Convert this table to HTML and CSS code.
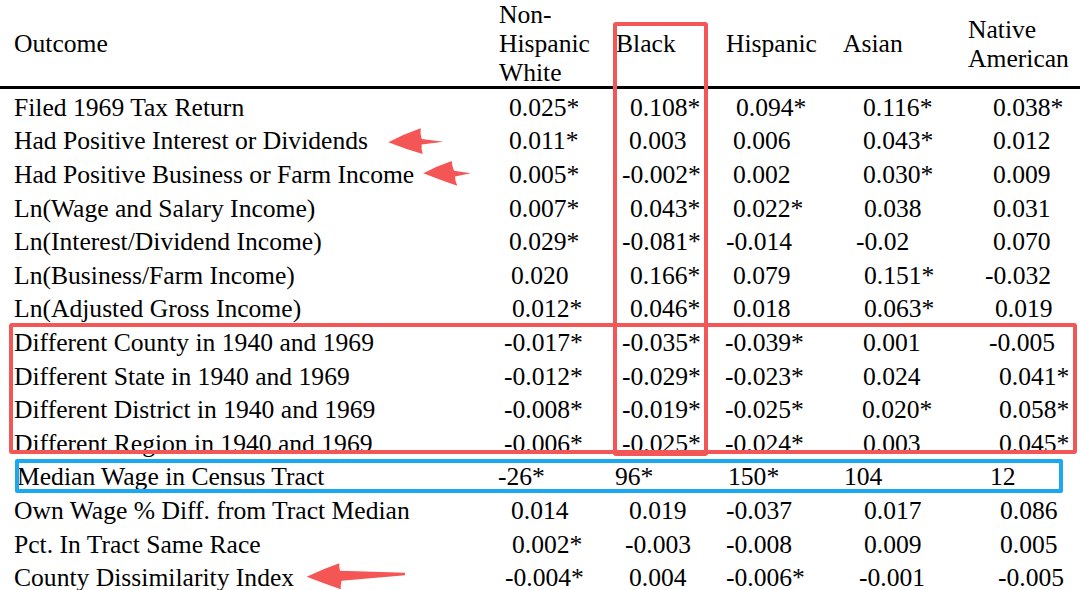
FILE: index.html
```html
<!DOCTYPE html>
<html lang="en">
<head>
<meta charset="utf-8">
<title>Outcome table</title>
<link rel="stylesheet" href="styles.css">
</head>
<body>
<div class="page">
  <div class="table">
    <div class="row head">
      <div class="cell lab">Outcome</div>
      <div class="cell h1">Non-<br>Hispanic<br>White</div>
      <div class="cell h2">Black</div>
      <div class="cell h3">Hispanic</div>
      <div class="cell h4">Asian</div>
      <div class="cell h5">Native<br>American</div>
    </div>
    <div class="rule"></div>
    <div class="body">
      <div class="row">
        <div class="cell lab">Filed 1969 Tax Return</div>
        <div class="cell c1">0.025*</div><div class="cell c2">0.108*</div><div class="cell c3 i3">0.094*</div><div class="cell c4">0.116*</div><div class="cell c5">0.038*</div>
      </div>
      <div class="row">
        <div class="cell lab">Had Positive Interest or Dividends</div>
        <div class="cell c1">0.011*</div><div class="cell c2 i-1">0.003</div><div class="cell c3">0.006</div><div class="cell c4">0.043*</div><div class="cell c5">0.012</div>
      </div>
      <div class="row">
        <div class="cell lab">Had Positive Business or Farm Income</div>
        <div class="cell c1">0.005*</div><div class="cell c2 i-8">-0.002*</div><div class="cell c3">0.002</div><div class="cell c4">0.030*</div><div class="cell c5">0.009</div>
      </div>
      <div class="row">
        <div class="cell lab">Ln(Wage and Salary Income)</div>
        <div class="cell c1">0.007*</div><div class="cell c2">0.043*</div><div class="cell c3">0.022*</div><div class="cell c4 i1">0.038</div><div class="cell c5">0.031</div>
      </div>
      <div class="row">
        <div class="cell lab">Ln(Interest/Dividend Income)</div>
        <div class="cell c1">0.029*</div><div class="cell c2 i-8">-0.081*</div><div class="cell c3 i-7">-0.014</div><div class="cell c4 i-7">-0.02</div><div class="cell c5">0.070</div>
      </div>
      <div class="row">
        <div class="cell lab">Ln(Business/Farm Income)</div>
        <div class="cell c1 i2">0.020</div><div class="cell c2">0.166*</div><div class="cell c3">0.079</div><div class="cell c4 i1">0.151*</div><div class="cell c5 i-8">-0.032</div>
      </div>
      <div class="row">
        <div class="cell lab">Ln(Adjusted Gross Income)</div>
        <div class="cell c1 i3">0.012*</div><div class="cell c2">0.046*</div><div class="cell c3">0.018</div><div class="cell c4 i1">0.063*</div><div class="cell c5 i2">0.019</div>
      </div>
      <div class="row">
        <div class="cell lab">Different County in 1940 and 1969</div>
        <div class="cell c1 i-5">-0.017*</div><div class="cell c2 i-8">-0.035*</div><div class="cell c3 i-8">-0.039*</div><div class="cell c4">0.001</div><div class="cell c5 i-4">-0.005</div>
      </div>
      <div class="row">
        <div class="cell lab">Different State in 1940 and 1969</div>
        <div class="cell c1 i-5">-0.012*</div><div class="cell c2 i-8">-0.029*</div><div class="cell c3 i-8">-0.023*</div><div class="cell c4">0.024</div><div class="cell c5 i6">0.041*</div>
      </div>
      <div class="row">
        <div class="cell lab">Different District in 1940 and 1969</div>
        <div class="cell c1 i-5">-0.008*</div><div class="cell c2 i-8">-0.019*</div><div class="cell c3 i-8">-0.025*</div><div class="cell c4 i-1">0.020*</div><div class="cell c5 i6">0.058*</div>
      </div>
      <div class="row">
        <div class="cell lab">Different Region in 1940 and 1969</div>
        <div class="cell c1 i-5">-0.006*</div><div class="cell c2 i-8">-0.025*</div><div class="cell c3 i-8">-0.024*</div><div class="cell c4">0.003</div><div class="cell c5 i6">0.045*</div>
      </div>
      <div class="row">
        <div class="cell lab med">Median Wage in Census Tract</div>
        <div class="cell c1 i-11">-26*</div><div class="cell c2 i-15">96*</div><div class="cell c3 i-5">150*</div><div class="cell c4 i-19">104</div><div class="cell c5 i-3">12</div>
      </div>
      <div class="row">
        <div class="cell lab">Own Wage % Diff. from Tract Median</div>
        <div class="cell c1 i2">0.014</div><div class="cell c2 i-1">0.019</div><div class="cell c3 i-7">-0.037</div><div class="cell c4 i1">0.017</div><div class="cell c5 i7">0.086</div>
      </div>
      <div class="row">
        <div class="cell lab">Pct. In Tract Same Race</div>
        <div class="cell c1 i3">0.002*</div><div class="cell c2 i-5">-0.003</div><div class="cell c3 i-7">-0.008</div><div class="cell c4 i1">0.009</div><div class="cell c5 i7">0.005</div>
      </div>
      <div class="row last">
        <div class="cell lab">County Dissimilarity Index</div>
        <div class="cell c1 i-4">-0.004*</div><div class="cell c2 i-1">0.004</div><div class="cell c3 i-7">-0.006*</div><div class="cell c4 i-4">-0.001</div><div class="cell c5 i5">-0.005</div>
      </div>
    </div>
  </div>

  <div class="box box-black"></div>
  <div class="box box-move"></div>
  <div class="box box-wage"></div>

  <svg class="arrows" width="1080" height="590" viewBox="0 0 1080 590" aria-hidden="true">
    <path d="M388.3 142.3 Q404 134 420.7 128.3 Q420 134 421.7 139 L443.3 141.7 L421.7 144.5 Q421 149 422.7 154 Q405 149 388.3 142.3 Z"/>
    <path d="M423.3 173.3 Q437 166 451.7 161 Q452 166 454 170.7 L470.7 173.3 L455 176.5 Q455 181 457.3 185.7 Q440 180 423.3 173.3 Z"/>
    <path d="M306.7 576.7 Q323 569 339.3 563.3 Q339 567 340 570.7 L405 572.8 L405 575.3 L341.5 580.7 Q340.5 585 340.7 589.3 Q323 583 306.7 576.7 Z"/>
  </svg>
</div>
</body>
</html>
```

FILE: styles.css
```css
html, body {
  margin: 0;
  padding: 0;
  background: #ffffff;
}

.page {
  position: relative;
  width: 1080px;
  height: 590px;
  overflow: hidden;
  font-family: "Liberation Serif", "Times New Roman", serif;
  font-size: 25.6px;
  color: #000000;
}

.row {
  display: grid;
  grid-template-columns: 495px 120px 110px 115px 125px 115px;
  line-height: 33.6px;
  white-space: nowrap;
}

.row.last {
  line-height: 24px;
  padding-top: 4.8px;
}

.head {
  height: 86px;
  line-height: 29px;
  align-items: center;
}

.rule {
  height: 3px;
  background: #000000;
}

.body {
  margin-top: 1.8px;
}

.cell.lab { padding-left: 14px; }
.cell.lab.med { padding-left: 17px; }

.h1 { padding-left: 4px; }
.h2 { padding-left: 1px; }
.h3 { padding-left: 1px; }
.h4 { padding-left: 3px; }
.h5 { padding-left: 3px; }

.c1 { padding-left: 14px; }
.c2 { padding-left: 15px; }
.c3 { padding-left: 8px; }
.c4 { padding-left: 23px; }
.c5 { padding-left: 28px; }

.i-19 { text-indent: -19px; }
.i-15 { text-indent: -15px; }
.i-11 { text-indent: -11px; }
.i-8 { text-indent: -8px; }
.i-7 { text-indent: -7px; }
.i-5 { text-indent: -5px; }
.i-4 { text-indent: -4px; }
.i-3 { text-indent: -3px; }
.i-1 { text-indent: -1px; }
.i1 { text-indent: 1px; }
.i2 { text-indent: 2px; }
.i3 { text-indent: 3px; }
.i5 { text-indent: 5px; }
.i6 { text-indent: 6px; }
.i7 { text-indent: 7px; }

.box {
  position: absolute;
  box-sizing: border-box;
  border: 4px solid #f25656;
  border-radius: 3px;
}

.box-black {
  left: 613px;
  top: 22px;
  width: 95px;
  height: 434px;
}

.box-move {
  left: 9px;
  top: 323px;
  width: 1068px;
  height: 131px;
  border-width: 4.5px;
}

.box-wage {
  left: 15px;
  top: 459px;
  width: 1048px;
  height: 34px;
  border-color: #1aa9f0;
  border-radius: 2px;
}

.arrows {
  position: absolute;
  left: 0;
  top: 0;
  fill: #f45555;
  pointer-events: none;
}
```
